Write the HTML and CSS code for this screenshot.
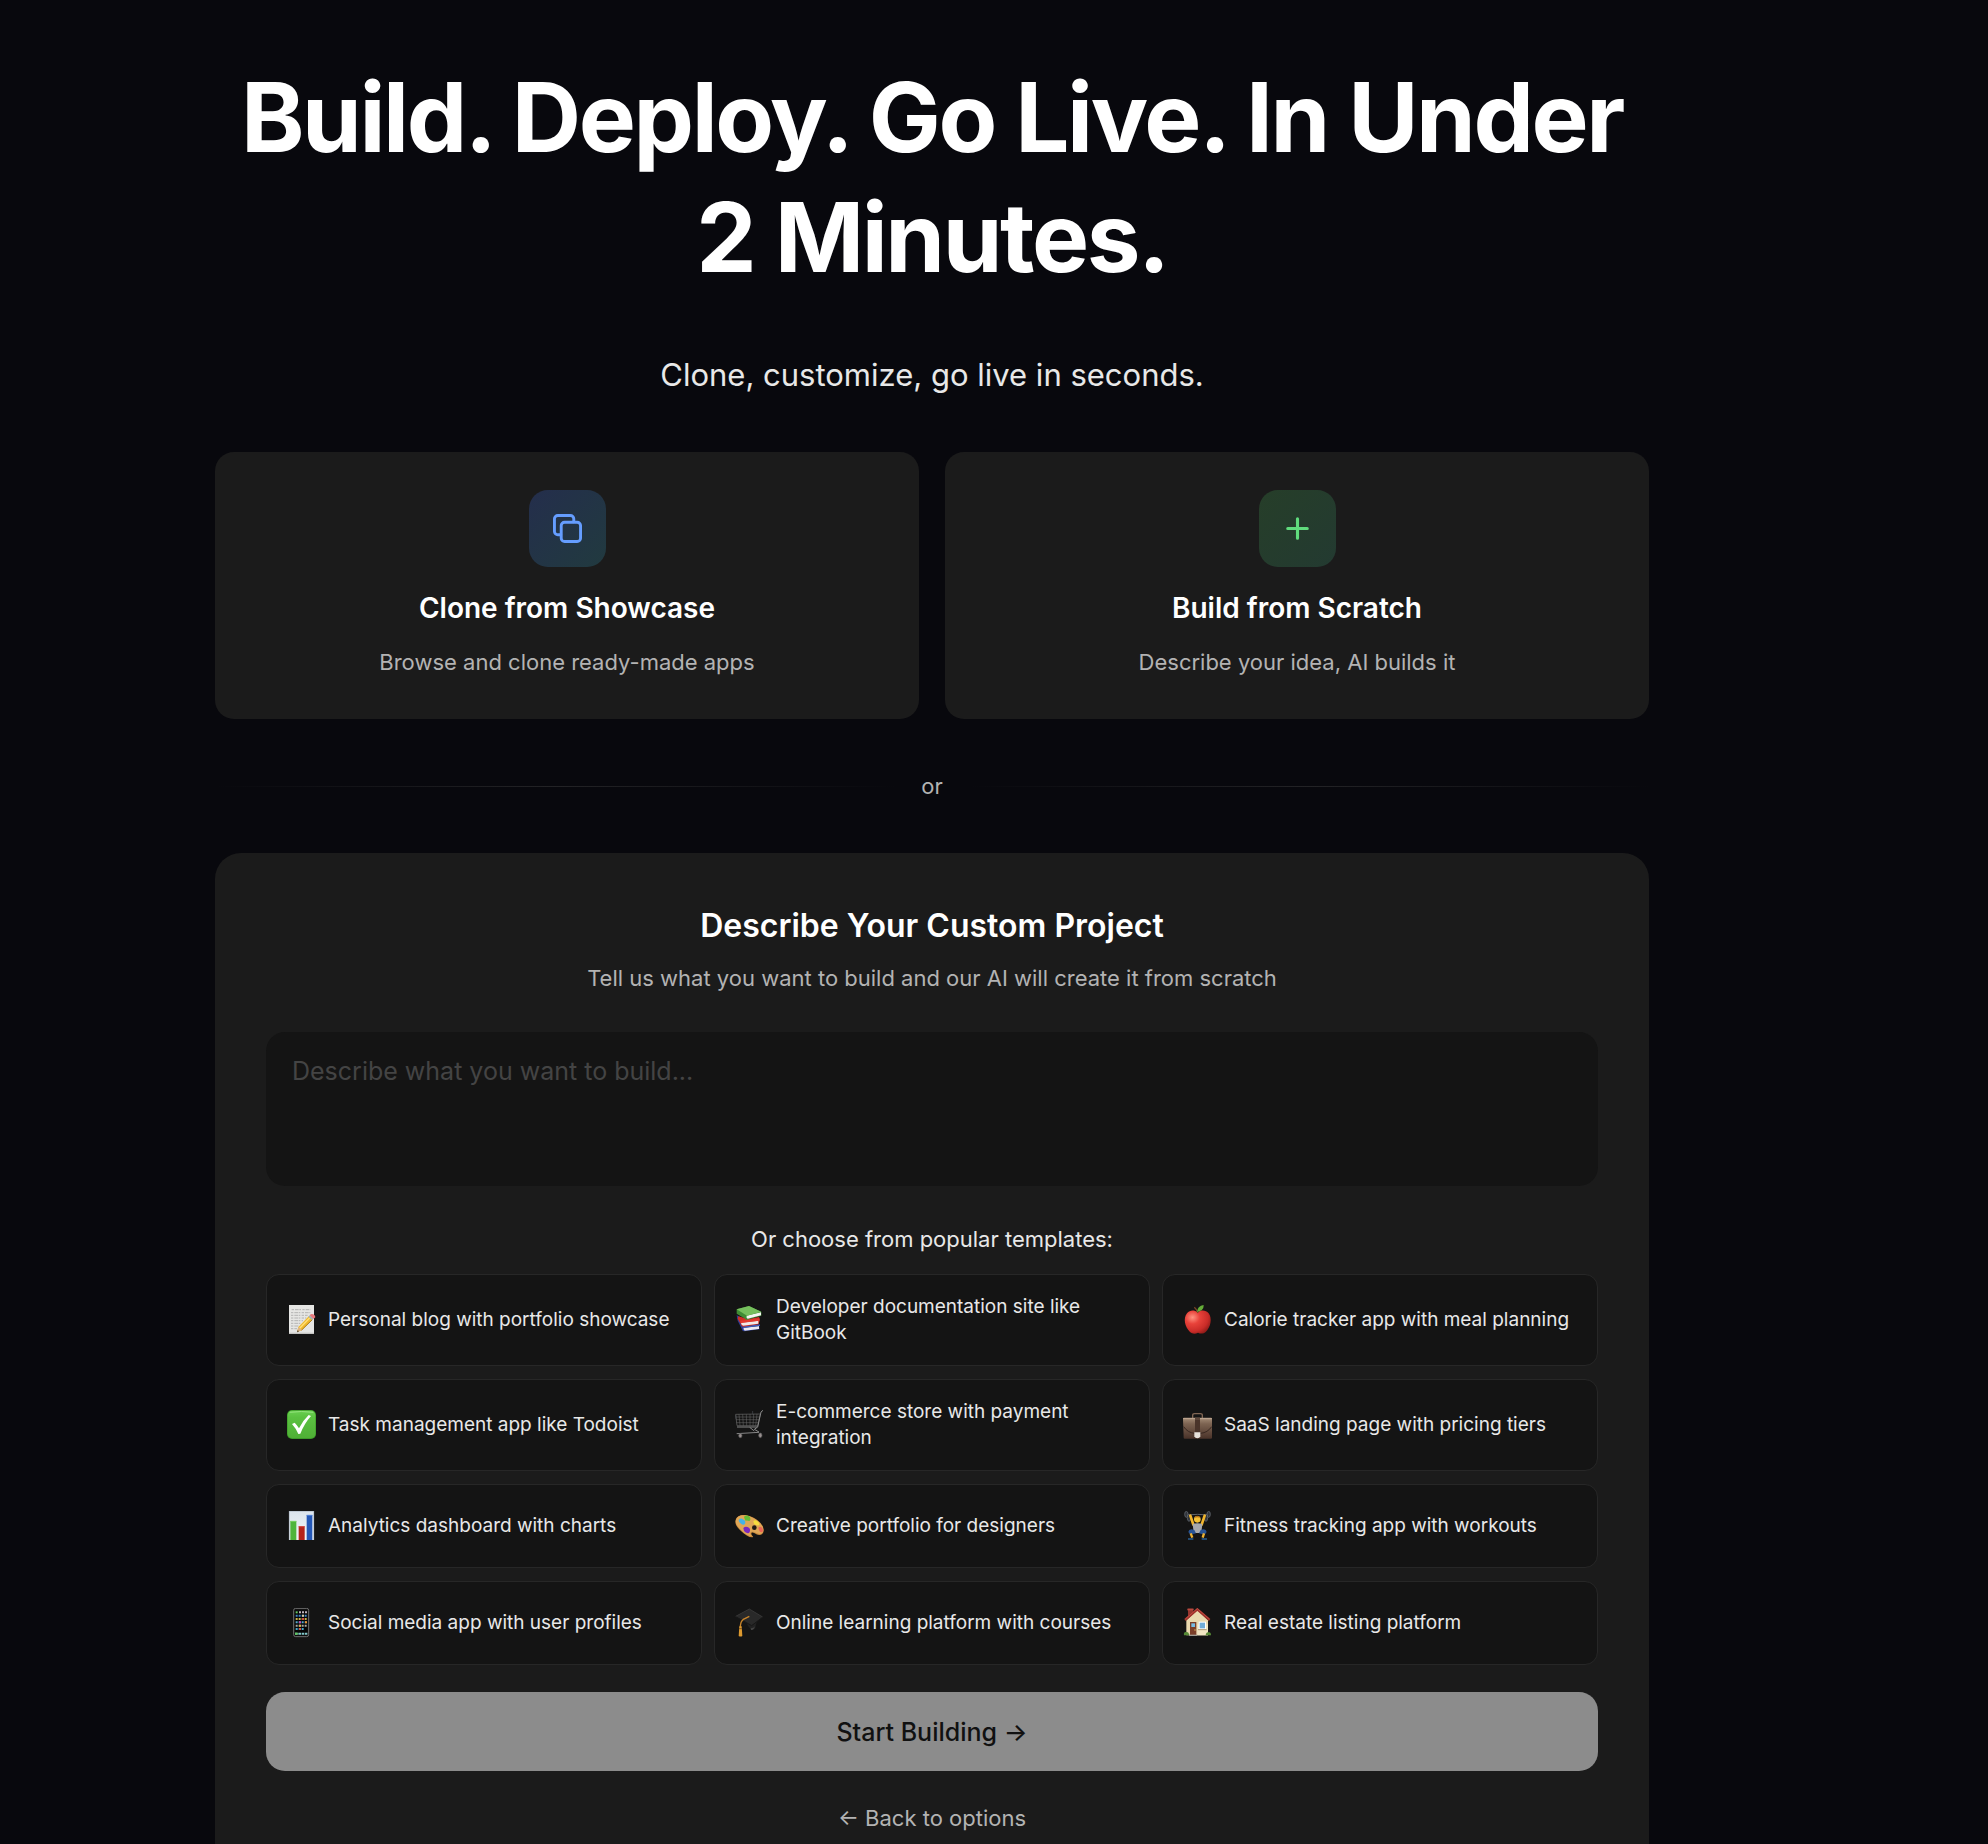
FILE: index.html
```html
<!DOCTYPE html>
<html lang="en">
<head>
<meta charset="utf-8">
<meta name="viewport" content="width=device-width, initial-scale=1">
<title>Build. Deploy. Go Live.</title>
<link rel="stylesheet" href="styles.css">
</head>
<body>
<main class="page">
  <header class="hero">
    <h1 class="hero-title">Build. Deploy. Go Live. In Under 2 Minutes.</h1>
    <p class="hero-sub">Clone, customize, go live in seconds.</p>
  </header>

  <div class="options">
    <button type="button" class="option">
      <span class="option-icon option-icon-blue">
        <svg width="29" height="29" viewBox="0 0 30 30" fill="none" stroke="#659dff" stroke-width="3" stroke-linecap="round" stroke-linejoin="round" aria-hidden="true">
          <rect x="8.500" y="8.500" width="20" height="20" rx="3.500"/>
          <path d="M8 21.500H5A3.500 3.500 0 0 1 1.500 18V5A3.500 3.500 0 0 1 5 1.500H18A3.500 3.500 0 0 1 21.500 5V8"/>
        </svg>
      </span>
      <span class="option-title">Clone from Showcase</span>
      <span class="option-text">Browse and clone ready-made apps</span>
    </button>
    <button type="button" class="option">
      <span class="option-icon option-icon-green">
        <svg width="29" height="29" viewBox="0 0 30 30" fill="none" stroke="#60dc7d" stroke-width="3.200" stroke-linecap="round" aria-hidden="true">
          <path d="M15 4.900V25.100M4.900 15H25.100"/>
        </svg>
      </span>
      <span class="option-title">Build from Scratch</span>
      <span class="option-text">Describe your idea, AI builds it</span>
    </button>
  </div>

  <div class="divider"><span>or</span></div>

  <form class="builder">
    <h2 class="builder-title">Describe Your Custom Project</h2>
    <p class="builder-sub"><label for="idea">Tell us what you want to build and our AI will create it from scratch</label></p>
    <textarea class="idea" id="idea" placeholder="Describe what you want to build..."></textarea>
    <p class="templates-label">Or choose from popular templates:</p>
    <div class="templates">
      <button type="button" class="template">
        <svg class="emoji" viewBox="0 0 90 90" aria-hidden="true">
          <rect x="6" y="0" width="75" height="87" fill="#e6e6e4"/>
          <path d="M6 85H81" stroke="#c4c4c2" stroke-width="4"/>
          <g stroke="#9c9c9c" stroke-width="2" stroke-dasharray="7 3 11 2 5 4"><path d="M14 14H70M12 23H70M12 31H62M12 39H58M12 47H48M12 55H42M12 63H36M12 71H30"/></g>
          <path d="M30 82L34 66L66 33L77 43L45 75Z" fill="#f0b92c"/>
          <path d="M38 70L70 37" stroke="#ffe07a" stroke-width="4"/>
          <path d="M43 76L76 44" stroke="#a87a20" stroke-width="3"/>
          <path d="M30 82L34 66L45 75Z" fill="#dcb487"/>
          <path d="M30 82L32 76L36 79Z" fill="#333"/>
          <path d="M64 35L68 31L79 41L75 45Z" fill="#9fb3b5"/>
          <path d="M68 31Q72 25 79 28Q86 32 85 37L79 42Z" fill="#e8797c"/>
        </svg>
        <span>Personal blog with portfolio showcase</span>
      </button>
      <button type="button" class="template">
        <svg class="emoji" viewBox="0 0 90 90" aria-hidden="true">
          <path d="M5 31L14 35L28 70L72 64L74 73L28 79Q22 79 20 71L8 47Z" fill="#2b3c96"/>
          <path d="M26 68L72 63L72 72L29 77Q24 73 26 68Z" fill="#eceaf2"/>
          <path d="M24 64L74 58L75 63L26 69Z" fill="#3f58b8"/>
          <path d="M10 34L40 42L72 36L75 43L71 58L24 65Q18 64 16 55L8 41Z" fill="#d02f27"/>
          <path d="M18 53L70 47V56L24 62Q18 59 18 53Z" fill="#f1e9e8"/>
          <path d="M16 47L72 41L73 47L18 54Z" fill="#e5392f"/>
          <path d="M5 13L42 3L79 21L79 32L37 44Q31 45 28 40L5 26Z" fill="#3f8c34"/>
          <path d="M35 32L78 22V31L38 41Q33 39 35 32Z" fill="#f5f5f2"/>
          <path d="M5 13L42 3L79 20L36 32Z" fill="#76bf5d"/>
        </svg>
        <span>Developer documentation site like GitBook</span>
      </button>
      <button type="button" class="template">
        <svg class="emoji" viewBox="0 0 90 90" aria-hidden="true">
          <defs><radialGradient id="apple" cx=".3" cy=".3" r=".8"><stop offset="0" stop-color="#ff9380"/><stop offset=".35" stop-color="#e8423a"/><stop offset=".75" stop-color="#c92c28"/><stop offset="1" stop-color="#8b1a18"/></radialGradient></defs>
          <path d="M44 22C54 14 68 14 77 25C88 40 84 66 68 81C60 88 52 86 45 83C37 87 29 88 21 81C5 66 0 39 12 25C21 14 34 15 44 22Z" fill="url(#apple)"/>
          <path d="M45 24Q42 14 34 7" stroke="#7b4426" stroke-width="4" fill="none"/>
          <path d="M42 21Q43 3 62 0Q63 17 42 21Z" fill="#65ad38"/>
        </svg>
        <span>Calorie tracker app with meal planning</span>
      </button>
      <button type="button" class="template">
        <svg class="emoji" viewBox="0 0 90 90" aria-hidden="true">
          <defs><linearGradient id="tick" x2="0" y2="1"><stop offset="0" stop-color="#69cf50"/><stop offset=".25" stop-color="#5bc141"/><stop offset="1" stop-color="#4fb036"/></linearGradient></defs>
          <rect width="87" height="87" rx="15" fill="#3c9a28"/>
          <rect x="2" y="2" width="83" height="82" rx="13" fill="url(#tick)"/>
          <path d="M8 7Q43 2 79 7" stroke="#95e27e" stroke-width="3" fill="none"/>
          <path d="M15 42L23 38Q30 45 36 55Q48 31 65 15L72 18Q53 39 40 71L34 72Q26 54 15 42Z" fill="#fff"/>
        </svg>
        <span>Task management app like Todoist</span>
      </button>
      <button type="button" class="template">
        <svg class="emoji" viewBox="0 0 90 90" aria-hidden="true">
          <g fill="none" stroke="#6c6c6c" stroke-width="2">
            <path d="M2 13L76 12L68 47L6 47Z"/>
            <path d="M2 21H74M3 29H72M4 38H70" stroke-width="1.500"/>
            <path d="M12 13L15 47M23 13L25 47M34 13L35 47M45 12V47M56 12L54 47M66 12L62 47" stroke-width="1.500"/>
            <path d="M84 1L78 6L68 51L58 58L72 66" stroke="#8a8a8a" stroke-width="3"/>
            <path d="M6 51H67M44 52L58 63M5 71L72 67" stroke="#858585" stroke-width="3"/>
          </g>
          <path d="M53 3V13M2 15L3 28" stroke="#4a4e55" stroke-width="2"/>
          <g fill="#988f8f" stroke="#555" stroke-width="2"><ellipse cx="16" cy="77" rx="5" ry="6"/><ellipse cx="76" cy="76" rx="5" ry="7"/></g>
        </svg>
        <span>E-commerce store with payment integration</span>
      </button>
      <button type="button" class="template">
        <svg class="emoji" viewBox="0 0 90 90" aria-hidden="true">
          <defs><linearGradient id="case" x2="0" y2="1"><stop offset="0" stop-color="#a58d78"/><stop offset=".3" stop-color="#7c6351"/><stop offset="1" stop-color="#493229"/></linearGradient></defs>
          <path d="M29 25V16Q29 11 35 11H52Q58 11 58 16V25" fill="none" stroke="#806654" stroke-width="4"/>
          <path d="M2 23H85L87 28V84Q87 86 83 86H5Q2 86 2 83L0 28Z" fill="url(#case)"/>
          <path d="M2 50Q14 68 34 70H53Q74 68 86 50" fill="none" stroke="#392821" stroke-width="3"/>
          <path d="M36 24H51V68H36Z" fill="#4a342a"/>
          <path d="M34 67H52V79Q50 85 43 85Q36 85 34 79Z" fill="#e7e2db"/>
          <path d="M0 26H87" stroke="#c0a993" stroke-width="3"/>
          <path d="M36 25H51" stroke="#5d463a" stroke-width="5"/>
        </svg>
        <span>SaaS landing page with pricing tiers</span>
      </button>
      <button type="button" class="template">
        <svg class="emoji" viewBox="0 0 90 90" aria-hidden="true">
          <defs><linearGradient id="sheet" x2="0" y2="1"><stop offset="0" stop-color="#dbe4ed"/><stop offset="1" stop-color="#f2f5f8"/></linearGradient></defs>
          <rect x="6" width="75" height="87" fill="url(#sheet)"/>
          <path d="M7 0V87M80 0V87M6 1H81" stroke="#a9b4c1" stroke-width="2"/>
          <path d="M10 30H28V87H10Z" fill="#4fb53b"/>
          <path d="M35 46H53V87H35Z" fill="#b5231b"/>
          <path d="M59 12H76V87H59Z" fill="#2458b8"/>
          <path d="M10 31H28" stroke="#7bd364" stroke-width="3"/><path d="M35 47H53" stroke="#d6483f" stroke-width="3"/><path d="M59 13H76" stroke="#5585db" stroke-width="3"/>
        </svg>
        <span>Analytics dashboard with charts</span>
      </button>
      <button type="button" class="template">
        <svg class="emoji" viewBox="0 0 90 90" aria-hidden="true">
          <path d="M2 27C6 12 27 8 49 17C69 25 86 41 86 58C86 71 75 75 64 70C56 65 50 62 49 68C50 76 57 75 53 79C43 80 30 72 18 60C7 49 -2 40 2 27Z" fill="#c98a3d"/>
          <path d="M3 26C8 12 27 9 48 18C68 26 84 42 85 56C85 68 76 71 66 67C56 61 47 60 46 66C46 73 51 73 49 75C40 76 29 68 19 58C8 47 0 38 3 26Z" fill="#e0a757"/>
          <circle cx="58" cy="50" r="7" fill="#201a14"/>
          <path d="M27 17Q35 10 44 17Q49 25 43 30Q36 27 32 29Q28 24 27 17Z" fill="#63bd35"/>
          <path d="M11 29Q12 21 21 23L30 29Q33 39 26 41Q16 40 11 29Z" fill="#43b3e8"/>
          <path d="M55 30Q62 24 70 33Q76 41 71 43Q63 44 57 38Z" fill="#f6dd3d"/>
          <path d="M70 50Q78 44 83 53Q86 62 79 64Q72 62 70 50Z" fill="#e96555"/>
          <path d="M25 51Q32 43 43 51Q48 59 42 66Q33 68 27 60Z" fill="#7a27bd"/>
        </svg>
        <span>Creative portfolio for designers</span>
      </button>
      <button type="button" class="template">
        <svg class="emoji" viewBox="0 0 90 90" aria-hidden="true">
          <path d="M7 12Q43 8 80 12" stroke="#606368" stroke-width="3" fill="none"/>
          <g fill="#30343a" stroke="#6d7178" stroke-width="2"><ellipse cx="10" cy="10" rx="5" ry="9"/><ellipse cx="18" cy="20" rx="5" ry="11"/><ellipse cx="77" cy="10" rx="5" ry="9"/><ellipse cx="69" cy="20" rx="5" ry="11"/></g>
          <path d="M22 14L31 41M65 14L56 41" stroke="#f1b52c" stroke-width="8" stroke-linecap="round"/>
          <circle cx="43" cy="25" r="10" fill="#f5c234"/>
          <path d="M34 20Q42 9 52 20Q43 17 34 20Z" fill="#b46e16"/>
          <path d="M29 39Q43 34 58 39L55 66H32Z" fill="#a7a9ad"/>
          <path d="M34 57Q18 51 16 63L22 71L39 67M53 57Q69 51 71 63L65 71L48 67" fill="#285394"/>
          <path d="M23 67L28 80M63 67L59 80" stroke="#edb232" stroke-width="7"/>
          <path d="M15 84H31M56 84H72" stroke="#285d92" stroke-width="4"/>
        </svg>
        <span>Fitness tracking app with workouts</span>
      </button>
      <button type="button" class="template">
        <svg class="emoji" viewBox="0 0 90 90" aria-hidden="true">
          <rect x="20" y="1" width="45" height="85" rx="6" fill="#111" stroke="#707070" stroke-width="3"/>
          <rect x="24" y="8" width="37" height="74" fill="#050505"/>
          <g stroke-width="6" fill="none">
            <path d="M26 13H61" stroke="#64c864" stroke-dasharray="6 30"/><path d="M36 13H61" stroke="#bdb3be" stroke-dasharray="6 3"/>
            <path d="M26 23H61" stroke="#4187c7" stroke-dasharray="6 3"/><path d="M45 23H51" stroke="#d8c99c"/>
            <path d="M26 33H61" stroke="#c9b24b" stroke-dasharray="6 3"/><path d="M45 33H51" stroke="#d04b41"/>
            <path d="M26 43H61" stroke="#55a7cb" stroke-dasharray="6 3"/><path d="M36 43H42" stroke="#c746af"/><path d="M54 43H60" stroke="#ee932d"/>
            <path d="M26 53H61" stroke="#aaa9a2" stroke-dasharray="6 3"/><path d="M36 53H42" stroke="#d7b846"/>
            <path d="M26 63H51" stroke="#48a7ca" stroke-dasharray="6 3"/><path d="M36 63H42" stroke="#d4554c"/>
            <path d="M24 77H61" stroke="#83c7c9" stroke-dasharray="8 2"/><path d="M24 77H32" stroke="#5fc85b"/>
          </g>
        </svg>
        <span>Social media app with user profiles</span>
      </button>
      <button type="button" class="template">
        <svg class="emoji" viewBox="0 0 90 90" aria-hidden="true">
          <path d="M30 34L66 38L60 62Q48 68 39 53Z" fill="#222"/>
          <path d="M47 61Q59 61 60 51Q58 68 48 66Z" fill="#444"/>
          <path d="M2 25L43 3L83 27L50 52Z" fill="#292929"/>
          <path d="M2 25L43 3L83 27" fill="none" stroke="#414141" stroke-width="2"/>
          <path d="M3 27L50 53L83 28" fill="none" stroke="#171717" stroke-width="3"/>
          <path d="M43 25L25 34Q16 40 16 59" fill="none" stroke="#c7842b" stroke-width="4"/>
          <path d="M13 55H20L22 84Q17 87 11 84Z" fill="#dc992f"/>
          <path d="M12 62H21" stroke="#80531e" stroke-width="3"/>
        </svg>
        <span>Online learning platform with courses</span>
      </button>
      <button type="button" class="template">
        <svg class="emoji" viewBox="0 0 90 90" aria-hidden="true">
          <path d="M15 2H30V26H15Z" fill="#96352e"/><path d="M13 2H32V7H13Z" fill="#b94a40"/>
          <path d="M10 37L43 6L75 37V82H10Z" fill="#e9d9af"/>
          <path d="M43 49H75V82H43Z" fill="#f1e5c2"/>
          <path d="M6 36L43 4L80 36" fill="none" stroke="#9f302a" stroke-width="7"/>
          <path d="M7 33L43 2L79 33" fill="none" stroke="#cf5c4e" stroke-width="2"/>
          <path d="M21 42H40V82H21Z" fill="#7b3f29"/><path d="M25 46H36V57H25Z" fill="#78bce4"/><circle cx="36" cy="66" r="2" fill="#e2bf61"/>
          <path d="M47 41H69V64H47Z" fill="#fff"/><path d="M50 44H66V61H50Z" fill="#71acd8"/><path d="M45 65H71" stroke="#af9872" stroke-width="3"/>
          <path d="M18 82H43" stroke="#9f9b92" stroke-width="4"/>
          <path d="M3 82Q1 72 9 72Q17 70 19 82ZM68 82Q69 72 76 73Q84 71 84 82Z" fill="#578b36"/>
        </svg>
        <span>Real estate listing platform</span>
      </button>
    </div>
    <button type="submit" class="start">Start Building →</button>
    <a class="back" href="#">← Back to options</a>
  </form>
</main>
</body>
</html>
```
FILE: styles.css
```css
* {
  box-sizing: border-box;
}

body {
  margin: 0;
  padding-right: 124px;
  background: #08080d;
  color: #fff;
  font-family: Inter, "Liberation Sans", sans-serif;
}

h1, h2, p {
  margin: 0;
  font-weight: 400;
}

button, textarea {
  font: inherit;
  color: inherit;
  border: 0;
}

button {
  cursor: pointer;
}

.page {
  max-width: 1434px;
  margin: 0 auto;
  padding-top: 57px;
}

.hero {
  text-align: center;
}

.hero-title {
  font-size: 96px;
  line-height: 120px;
  font-weight: 700;
  letter-spacing: -0.025em;
}

.hero-sub {
  margin: 56px 0 55px;
  font-size: 31px;
  line-height: 44px;
  color: #e8e8e8;
}

.options {
  display: grid;
  grid-template-columns: 1fr 1fr;
  gap: 26px;
}

.option {
  display: flex;
  flex-direction: column;
  align-items: center;
  padding: 38px;
  border-radius: 19px;
  background: #1b1b1b;
}

.option-icon {
  display: grid;
  place-items: center;
  width: 77px;
  height: 77px;
  margin-bottom: 20px;
  border-radius: 19px;
}

.option-icon-blue {
  background: linear-gradient(135deg, #242e4c, #213a3f);
}

.option-icon-green {
  background: linear-gradient(135deg, #263e29, #233a31);
}

.option-title {
  margin-bottom: 14px;
  font-size: 28px;
  line-height: 42px;
  font-weight: 600;
}

.option-text {
  font-size: 22px;
  line-height: 38px;
  color: #b3b3b3;
}

.divider {
  display: flex;
  align-items: center;
  gap: 26px;
  margin: 51px 0;
  font-size: 22px;
  line-height: 32px;
  color: #b3b3b3;
}

.divider::before,
.divider::after {
  content: "";
  flex: 1;
  height: 1px;
  background: linear-gradient(90deg, transparent, #232326, transparent);
}

.builder {
  padding: 51px;
  border-radius: 26px;
  background: #1b1b1b;
  text-align: center;
}

.builder-title {
  margin-bottom: 12px;
  font-size: 32px;
  line-height: 44px;
  font-weight: 600;
}

.builder-sub {
  font-size: 22px;
  line-height: 36px;
  color: #b3b3b3;
}

.idea {
  display: block;
  width: 100%;
  height: 154px;
  margin: 36px 0 37px;
  padding: 20px 26px;
  border-radius: 19px;
  background: #141414;
  font-size: 25px;
  line-height: 38px;
  resize: none;
}

.idea::placeholder {
  color: #444;
  opacity: 1;
}

.templates-label {
  margin-bottom: 19px;
  font-size: 22px;
  line-height: 32px;
  color: #e8e8e8;
}

.templates {
  display: grid;
  grid-template-columns: repeat(3, 1fr);
  gap: 13px 12px;
}

.template {
  display: flex;
  align-items: center;
  gap: 11px;
  min-height: 84px;
  padding: 19px 20px;
  border: 1px solid #272727;
  border-radius: 13px;
  background: #141414;
  color: #e8e8e8;
  font-size: 19px;
  line-height: 26px;
  text-align: left;
}

.emoji {
  flex: none;
  width: 30px;
  height: 30px;
}

.start {
  display: block;
  width: 100%;
  height: 79px;
  margin: 27px 0 31px;
  border-radius: 19px;
  background: #8c8c8c;
  color: #111;
  font-size: 25px;
  font-weight: 500;
}

.back {
  font-size: 22px;
  line-height: 32px;
  color: #b3b3b3;
  text-decoration: none;
}
```
